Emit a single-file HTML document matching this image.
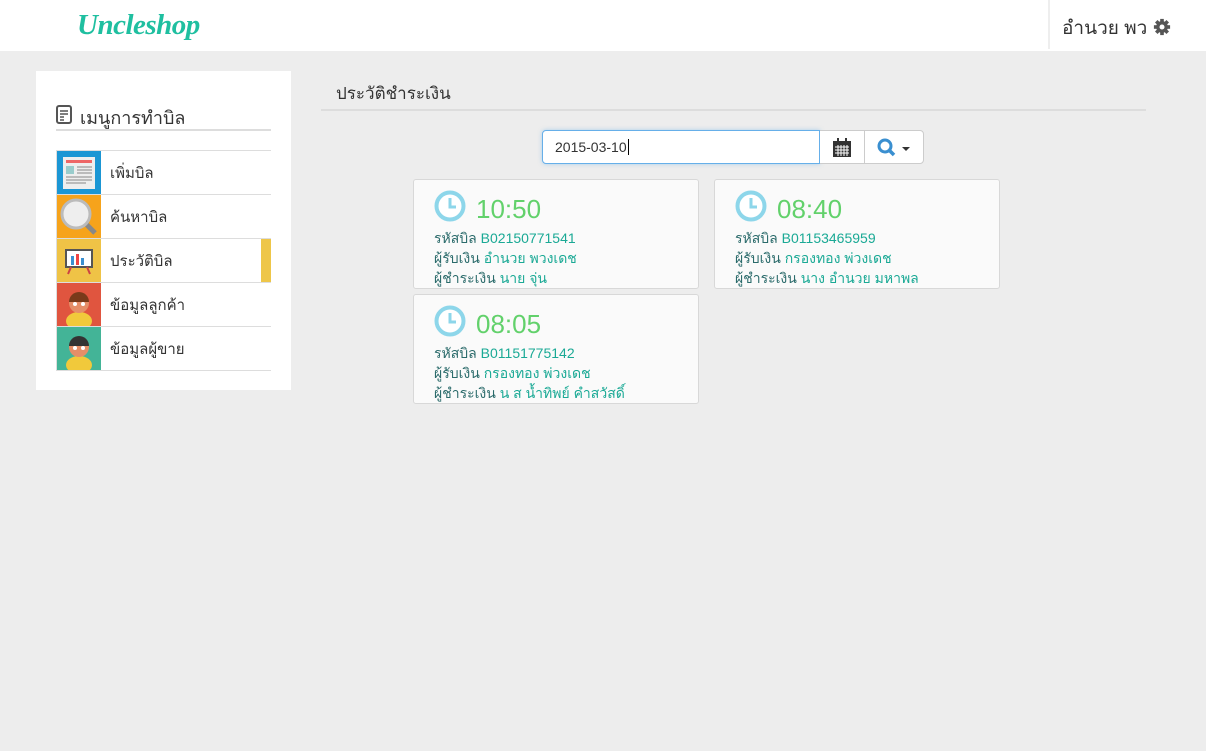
<!DOCTYPE html>
<html><head><meta charset="utf-8"><style>
*{box-sizing:border-box;margin:0;padding:0}
body{width:1206px;height:751px;background:#ededed;font-family:"Liberation Sans",sans-serif;position:relative;overflow:hidden;color:#333}
.hdr{position:absolute;left:0;top:0;width:1206px;height:51px;background:#fff}
.logo{position:absolute;left:77px;top:9px;font-family:"Liberation Serif",serif;font-style:italic;font-weight:bold;font-size:29px;color:#1fbfa0;letter-spacing:-0.5px}
.user{position:absolute;left:1048px;top:0;height:49px;border-left:2px solid #eee;padding:13px 0 0 12px;font-size:19px;color:#333}
.side{position:absolute;left:36px;top:71px;width:255px;height:319px;background:#fff}
.mh{position:absolute;left:20px;top:32px;width:215px;height:28px;border-bottom:2px solid #ddd;font-size:18px;padding-left:24px;color:#333}
.items{position:absolute;left:20px;top:79px;width:215px;border-top:1px solid #ddd}
.it{height:44px;border-bottom:1px solid #ddd;border-left:1px solid #ddd;position:relative;font-size:15px;line-height:45px;padding-left:53px}
.ic{position:absolute;left:0;top:0;width:44px;height:43px}
.bar{position:absolute;right:0;top:0;width:10px;height:43px;background:#eec649}
.title{position:absolute;left:321px;top:80px;width:825px;height:31px;border-bottom:2px solid #ddd;padding-left:15px;font-size:17px}
.inp{position:absolute;left:542px;top:130px;width:278px;height:34px;border:1px solid #66afe9;border-radius:4px 0 0 4px;background:#fff;font-size:14px;padding:8px 12px;box-shadow:0 0 4px rgba(102,175,233,.5)}
.b1{position:absolute;left:820px;top:130px;width:45px;height:34px;background:#fff;border:1px solid #ccc;border-left:none}
.b2{position:absolute;left:864px;top:130px;width:60px;height:34px;background:#fff;border:1px solid #ccc;border-radius:0 4px 4px 0}
.card{position:absolute;width:286px;height:110px;background:#fafafa;border:1px solid #d8d8d8;border-radius:3px;padding-left:20px}
.card svg{position:absolute;left:20px;top:10px}
.tm{position:absolute;left:62px;top:14px;font-size:26px;color:#62d16b}
.ln{position:absolute;left:20px;font-size:14px;color:#2b6b6b}
.ln b{font-weight:normal;color:#1aa995}
</style></head><body>
<div class="hdr"><div class="logo">Uncleshop</div>
<div class="user">อำนวย พว <svg width="18" height="18" viewBox="0 0 20 20" style="vertical-align:-2px"><g fill="#555"><circle cx="10" cy="10" r="6.5"/><rect x="8" y="1" width="4" height="18"/><rect x="1" y="8" width="18" height="4"/><rect x="8" y="1" width="4" height="18" transform="rotate(45 10 10)"/><rect x="8" y="1" width="4" height="18" transform="rotate(-45 10 10)"/></g><circle cx="10" cy="10" r="2.8" fill="#fff"/></svg></div></div>
<div class="side">
<div class="mh"><svg width="16" height="19" viewBox="0 0 16 19" style="position:absolute;left:0;top:2px"><rect x="1" y="1" width="14" height="17" rx="2" fill="#fff" stroke="#555" stroke-width="2"/><path d="M4 6h8M4 9h8M4 12h4M4 15h4" stroke="#555" stroke-width="1.5"/></svg>เมนูการทำบิล</div>
<div class="items">
<div class="it"><div class="ic" style="background:#1b96d4"><svg width="44" height="43"><rect x="6" y="6" width="32" height="32" fill="#eee"/><rect x="9" y="9" width="26" height="3" fill="#e66"/><rect x="9" y="15" width="8" height="8" fill="#9cc"/><path d="M20 16h15M20 19h15M20 22h15M9 26h26M9 29h26M9 32h20" stroke="#aaa" stroke-width="1.5"/></svg></div>เพิ่มบิล</div>
<div class="it"><div class="ic" style="background:#f6a31b"><svg width="44" height="43"><line x1="26" y1="26" x2="38" y2="38" stroke="#888" stroke-width="5"/><circle cx="19" cy="19" r="14" fill="#eee" stroke="#bbb" stroke-width="3"/></svg></div>ค้นหาบิล</div>
<div class="it"><div class="ic" style="background:#efc346"><svg width="44" height="43"><rect x="9" y="11" width="26" height="17" fill="#fff" stroke="#555" stroke-width="2"/><rect x="14" y="17" width="3" height="9" fill="#3a8fd0"/><rect x="19" y="15" width="3" height="11" fill="#e44"/><rect x="24" y="19" width="3" height="7" fill="#3a8fd0"/><path d="M14 28l-3 7M30 28l3 7" stroke="#c44" stroke-width="2"/></svg></div>ประวัติบิล<div class="bar"></div></div>
<div class="it"><div class="ic" style="background:#e0553f"><svg width="44" height="43"><ellipse cx="22" cy="38" rx="13" ry="9" fill="#f1c93b"/><circle cx="22" cy="20" r="10" fill="#e58e68"/><path d="M12 19a10 10 0 0 1 20 0z" fill="#7a3a1a"/><circle cx="18" cy="21" r="2" fill="#fff"/><circle cx="26" cy="21" r="2" fill="#fff"/></svg></div>ข้อมูลลูกค้า</div>
<div class="it"><div class="ic" style="background:#43b497"><svg width="44" height="43"><ellipse cx="22" cy="38" rx="13" ry="9" fill="#f1c93b"/><circle cx="22" cy="20" r="10" fill="#e58e68"/><path d="M12 19a10 10 0 0 1 20 0z" fill="#333"/><circle cx="18" cy="21" r="2" fill="#fff"/><circle cx="26" cy="21" r="2" fill="#fff"/></svg></div>ข้อมูลผู้ขาย</div>
</div></div>
<div class="title">ประวัติชำระเงิน</div>
<div class="inp">2015-03-10<span style="border-left:1px solid #000;margin-left:1px"></span></div>
<div class="b1"><svg width="20" height="20" viewBox="0 0 20 20" style="position:absolute;left:12px;top:7px"><rect x="1" y="3" width="18" height="16" fill="#333"/><rect x="5" y="0" width="2" height="4" fill="#333"/><rect x="13" y="0" width="2" height="4" fill="#333"/><path d="M3 9h14M3 12h14M3 15h14M6 7v11M9 7v11M12 7v11M15 7v11" stroke="#fff" stroke-width="1"/></svg></div>
<div class="b2"><svg width="40" height="20" style="position:absolute;left:12px;top:7px"><circle cx="8" cy="8" r="6" fill="none" stroke="#3a8fd0" stroke-width="3"/><line x1="12" y1="12" x2="17" y2="17" stroke="#3a8fd0" stroke-width="3.5"/><path d="M25 9h8l-4 4z" fill="#333"/></svg></div>

<div class="card" style="left:413px;top:179px"><svg width="32" height="32"><circle cx="16" cy="16" r="13.5" fill="#fff" stroke="#8dd6ea" stroke-width="4"/><path d="M16 8v9h6" fill="none" stroke="#8dd6ea" stroke-width="3"/></svg><div class="tm">10:50</div>
<div class="ln" style="top:48px">รหัสบิล <b>B02150771541</b></div><div class="ln" style="top:68px">ผู้รับเงิน <b>อำนวย พวงเดช</b></div><div class="ln" style="top:88px">ผู้ชำระเงิน <b>นาย จุ่น</b></div></div>
<div class="card" style="left:714px;top:179px"><svg width="32" height="32"><circle cx="16" cy="16" r="13.5" fill="#fff" stroke="#8dd6ea" stroke-width="4"/><path d="M16 8v9h6" fill="none" stroke="#8dd6ea" stroke-width="3"/></svg><div class="tm">08:40</div>
<div class="ln" style="top:48px">รหัสบิล <b>B01153465959</b></div><div class="ln" style="top:68px">ผู้รับเงิน <b>กรองทอง พ่วงเดช</b></div><div class="ln" style="top:88px">ผู้ชำระเงิน <b>นาง อำนวย มหาพล</b></div></div>
<div class="card" style="left:413px;top:294px"><svg width="32" height="32"><circle cx="16" cy="16" r="13.5" fill="#fff" stroke="#8dd6ea" stroke-width="4"/><path d="M16 8v9h6" fill="none" stroke="#8dd6ea" stroke-width="3"/></svg><div class="tm">08:05</div>
<div class="ln" style="top:48px">รหัสบิล <b>B01151775142</b></div><div class="ln" style="top:68px">ผู้รับเงิน <b>กรองทอง พ่วงเดช</b></div><div class="ln" style="top:88px">ผู้ชำระเงิน <b>น ส น้ำทิพย์ คำสวัสดิ์</b></div></div>
</body></html>
